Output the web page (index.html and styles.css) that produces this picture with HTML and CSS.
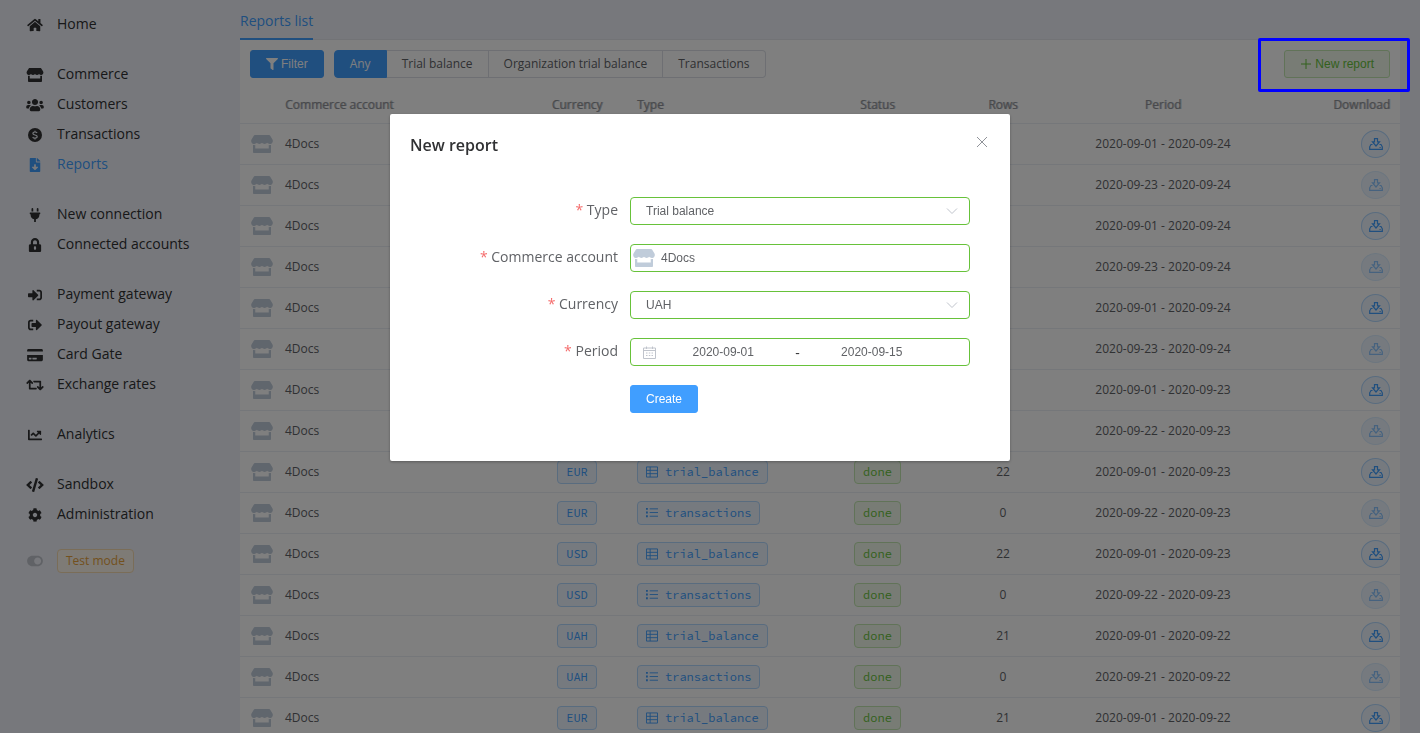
FILE: index.html
```html
<!DOCTYPE html>
<html lang="en">
<head>
<meta charset="utf-8">
<meta name="viewport" content="width=device-width, initial-scale=1">
<title>Reports list</title>
<link rel="stylesheet" href="styles.css">
</head>
<body>
<svg class="sprite" aria-hidden="true">
  <symbol id="home" viewBox="0 0 576 512"><path d="M280.37 148.26L96 300.11V464a16 16 0 0 0 16 16l112.06-.29a16 16 0 0 0 15.92-16V368a16 16 0 0 1 16-16h64a16 16 0 0 1 16 16v95.64a16 16 0 0 0 16 16.05L464 480a16 16 0 0 0 16-16V300L295.67 148.26a12.19 12.19 0 0 0-15.3 0zM571.6 251.47L488 182.56V44.05a12 12 0 0 0-12-12h-56a12 12 0 0 0-12 12v72.61L318.47 43a48 48 0 0 0-61 0L4.34 251.47a12 12 0 0 0-1.6 16.9l25.5 31A12 12 0 0 0 45.15 301l235.22-193.74a12.19 12.19 0 0 1 15.3 0L530.9 301a12 12 0 0 0 16.9-1.6l25.5-31a12 12 0 0 0-1.7-16.93z"/></symbol>
  <symbol id="store" viewBox="0 0 616 512"><path d="M602 118.6L537.1 15C531.3 5.7 521 0 510 0H106C95 0 84.7 5.7 78.9 15L14 118.6c-33.5 53.5-3.8 127.9 58.8 136.4 4.5.6 9.1.9 13.7.9 29.6 0 55.8-13 73.8-33.1 18 20.1 44.3 33.1 73.8 33.1 29.6 0 55.8-13 73.8-33.1 18 20.1 44.3 33.1 73.8 33.1 29.6 0 55.8-13 73.8-33.1 18.1 20.1 44.3 33.1 73.8 33.1 4.7 0 9.2-.3 13.7-.9 62.8-8.4 92.6-82.8 59-136.4zM529.5 288c-10 0-19.9-1.5-29.5-3.8V384H116v-99.8c-9.6 2.2-19.5 3.8-29.5 3.8-6 0-12.1-.4-18-1.2-5.6-.8-11.1-2.1-16.4-3.6V480c0 17.700 14.300 32 32 32h448c17.700 0 32-14.300 32-32V283.200c-5.400 1.600-10.800 2.900-16.400 3.600-6.100.8-12.100 1.200-18.200 1.200z"/></symbol>
  <symbol id="users" viewBox="0 0 640 512"><path d="M96 224c35.300 0 64-28.700 64-64s-28.700-64-64-64-64 28.700-64 64 28.700 64 64 64zm448 0c35.300 0 64-28.700 64-64s-28.700-64-64-64-64 28.700-64 64 28.700 64 64 64zm32 32h-64c-17.600 0-33.500 7.100-45.100 18.600 40.300 22.100 68.900 62 75.100 109.400h66c17.700 0 32-14.300 32-32v-32c0-35.300-28.700-64-64-64zm-256 0c61.900 0 112-50.100 112-112S381.900 32 320 32 208 82.100 208 144s50.100 112 112 112zm76.800 32h-8.300c-20.800 10-43.900 16-68.500 16s-47.600-6-68.500-16h-8.300C179.600 288 128 339.600 128 403.200V432c0 26.500 21.500 48 48 48h288c26.500 0 48-21.500 48-48v-28.800c0-63.600-51.600-115.200-115.200-115.200zm-223.700-13.400C161.500 263.100 145.600 256 128 256H64c-35.300 0-64 28.700-64 64v32c0 17.700 14.300 32 32 32h65.900c6.300-47.400 34.900-87.300 75.200-109.400z"/></symbol>
  <symbol id="coin" viewBox="0 0 14 14"><circle cx="7" cy="7" r="7"/><path d="M9.100 5.100C8.700 4.300 7.900 4 7 4c-1.200 0-2.100.6-2.100 1.500C4.900 7.500 9.200 6.500 9.200 8.600c0 .9-1 1.500-2.200 1.500-1 0-1.900-.4-2.300-1.200M7 2.700V4m0 6.100v1.300" fill="none" stroke="#eef0f8" stroke-width="1.2"/></symbol>
  <symbol id="file" viewBox="0 0 384 512"><path d="M224 136V0H24C10.700 0 0 10.700 0 24v464c0 13.300 10.700 24 24 24h336c13.300 0 24-10.700 24-24V160H248c-13.200 0-24-10.800-24-24zm76.450 211.360l-96.420 95.700c-6.650 6.610-17.390 6.610-24.040 0l-96.420-95.700C73.420 337.290 80.540 320 94.820 320H160v-80c0-8.840 7.160-16 16-16h32c8.840 0 16 7.160 16 16v80h65.180c14.280 0 21.400 17.290 11.270 27.360zM377 105L279.100 7c-4.500-4.500-10.600-7-17-7H256v128h128v-6.100c0-6.300-2.500-12.400-7-16.900z"/></symbol>
  <symbol id="plug" viewBox="0 0 384 512"><path d="M320 32a32 32 0 0 0-64 0v96h64zm48 128H16A16 16 0 0 0 0 176v32a16 16 0 0 0 16 16h16v32a160.070 160.070 0 0 0 128 156.800V512h64v-99.200A160.070 160.070 0 0 0 352 256v-32h16a16 16 0 0 0 16-16v-32a16 16 0 0 0-16-16zM128 32a32 32 0 0 0-64 0v96h64z"/></symbol>
  <symbol id="lock" viewBox="0 0 448 512"><path fill-rule="evenodd" d="M400 224h-24v-72C376 68.200 307.800 0 224 0S72 68.200 72 152v72H48c-26.500 0-48 21.500-48 48v192c0 26.500 21.500 48 48 48h352c26.500 0 48-21.500 48-48V272c0-26.500-21.500-48-48-48zm-104 0H152v-72c0-39.700 32.300-72 72-72s72 32.300 72 72v72zM264 392c0 22-18 40-40 40s-40-18-40-40v-48c0-22 18-40 40-40s40 18 40 40z"/></symbol>
  <symbol id="sign-in" viewBox="0 0 512 512"><path d="M416 448h-84c-6.600 0-12-5.400-12-12v-40c0-6.600 5.400-12 12-12h84c17.700 0 32-14.300 32-32V160c0-17.700-14.300-32-32-32h-84c-6.600 0-12-5.400-12-12V76c0-6.600 5.400-12 12-12h84c53 0 96 43 96 96v192c0 53-43 96-96 96zm-47-201L201 79c-15-15-41-4.500-41 17v96H24c-13.300 0-24 10.700-24 24v96c0 13.300 10.700 24 24 24h136v96c0 21.500 26 32 41 17l168-168c9.300-9.400 9.300-24.600 0-34z"/></symbol>
  <symbol id="sign-out" viewBox="0 0 512 512"><path d="M497 273L329 441c-15 15-41 4.500-41-17v-96H152c-13.300 0-24-10.700-24-24v-96c0-13.300 10.700-24 24-24h136V88c0-21.400 25.900-32 41-17l168 168c9.300 9.400 9.300 24.600 0 34zM192 436v-40c0-6.600-5.400-12-12-12H96c-17.700 0-32-14.300-32-32V160c0-17.700 14.300-32 32-32h84c6.600 0 12-5.400 12-12V76c0-6.600-5.400-12-12-12H96c-53 0-96 43-96 96v192c0 53 43 96 96 96h84c6.600 0 12-5.400 12-12z"/></symbol>
  <symbol id="card" viewBox="0 0 576 512"><path d="M0 432c0 26.500 21.500 48 48 48h480c26.500 0 48-21.500 48-48V256H0v176zm192-68c0-6.600 5.400-12 12-12h136c6.600 0 12 5.400 12 12v40c0 6.600-5.400 12-12 12H204c-6.600 0-12-5.400-12-12v-40zm-128 0c0-6.600 5.400-12 12-12h72c6.600 0 12 5.400 12 12v40c0 6.600-5.400 12-12 12H76c-6.600 0-12-5.400-12-12v-40zM576 80v48H0V80c0-26.500 21.500-48 48-48h480c26.500 0 48 21.500 48 48z"/></symbol>
  <symbol id="retweet" viewBox="0 0 640 512"><path d="M629.657 343.598L528.971 444.284c-9.373 9.372-24.568 9.372-33.941 0L394.343 343.598c-9.373-9.373-9.373-24.569 0-33.941l10.823-10.823c9.562-9.562 25.133-9.340 34.419.492L480 342.118V160H292.451a24.005 24.005 0 0 1-16.971-7.029l-16-16C244.361 121.851 255.069 96 276.451 96H520c13.255 0 24 10.745 24 24v222.118l40.416-42.792c9.285-9.831 24.856-10.054 34.419-.492l10.823 10.823c9.372 9.372 9.372 24.569-.001 33.941zm-265.138 15.431A23.999 23.999 0 0 0 347.548 352H160V169.881l40.416 42.792c9.286 9.831 24.856 10.054 34.419.491l10.822-10.822c9.373-9.373 9.373-24.569 0-33.941L144.971 67.716c-9.373-9.373-24.569-9.373-33.941 0L10.343 168.402c-9.373 9.373-9.373 24.569 0 33.941l10.822 10.822c9.562 9.562 25.133 9.340 34.419-.491L96 169.881V392c0 13.255 10.745 24 24 24h243.549c21.382 0 32.090-25.851 16.971-40.971l-16.001-16z"/></symbol>
  <symbol id="chart" viewBox="0 0 512 512"><path d="M496 384H64V80c0-8.840-7.160-16-16-16H16C7.160 64 0 71.160 0 80v336c0 17.670 14.330 32 32 32h464c8.840 0 16-7.160 16-16v-32c0-8.840-7.160-16-16-16zM464 96H345.940c-21.380 0-32.090 25.850-16.970 40.970l32.400 32.400L288 242.750l-73.370-73.370c-12.500-12.500-32.760-12.500-45.250 0l-68.690 68.690c-6.250 6.250-6.250 16.380 0 22.630l22.620 22.620c6.250 6.250 16.380 6.250 22.630 0L192 237.250l73.370 73.370c12.500 12.500 32.760 12.500 45.250 0l96-96 32.400 32.400c15.120 15.120 40.970 4.410 40.970-16.970V112c.01-8.840-7.150-16-15.990-16z"/></symbol>
  <symbol id="code" viewBox="0 0 640 512"><path d="M278.900 511.500l-61-17.700c-6.400-1.800-10-8.500-8.200-14.900L346.200 8.700c1.800-6.400 8.500-10 14.900-8.200l61 17.700c6.400 1.800 10 8.500 8.200 14.900L293.800 503.300c-1.900 6.400-8.500 10.100-14.900 8.200zm-114-112.200l43.500-46.400c4.600-4.900 4.300-12.700-.8-17.200L117 256l90.600-79.700c5.100-4.500 5.500-12.300.8-17.200l-43.500-46.400c-4.500-4.800-12.100-5.100-17-.5L3.800 247.200c-5.100 4.700-5.100 12.800 0 17.500l144.100 135.100c4.900 4.600 12.500 4.400 17-.5zm327.200.6l144.100-135.100c5.100-4.700 5.100-12.800 0-17.500L492.100 112.100c-4.800-4.500-12.400-4.300-17 .5L431.600 159c-4.600 4.900-4.300 12.700.8 17.200L523 256l-90.600 79.700c-5.100 4.500-5.500 12.300-.8 17.200l43.500 46.400c4.500 4.900 12.100 5.100 17 .6z"/></symbol>
  <symbol id="cog" viewBox="0 0 512 512"><path d="M487.400 315.700l-42.600-24.600c4.300-23.200 4.300-47 0-70.200l42.600-24.600c4.900-2.800 7.100-8.600 5.500-14-11.100-35.600-30-67.800-54.700-94.600-3.800-4.100-10-5.100-14.800-2.300L380.800 110c-17.900-15.400-38.500-27.300-60.800-35.100V25.800c0-5.600-3.900-10.500-9.400-11.700-36.700-8.200-74.300-7.800-109.200 0-5.500 1.200-9.400 6.100-9.400 11.700V75c-22.200 7.900-42.800 19.800-60.800 35.100L88.700 85.500c-4.900-2.800-11-1.900-14.800 2.300-24.700 26.700-43.600 58.900-54.700 94.600-1.700 5.400.6 11.200 5.500 14L67.300 221c-4.300 23.200-4.300 47 0 70.200l-42.600 24.600c-4.900 2.800-7.100 8.600-5.500 14 11.100 35.600 30 67.800 54.700 94.600 3.800 4.100 10 5.100 14.800 2.300l42.600-24.600c17.900 15.400 38.500 27.300 60.800 35.100v49.200c0 5.600 3.900 10.500 9.400 11.700 36.700 8.200 74.300 7.800 109.200 0 5.500-1.200 9.400-6.100 9.400-11.700v-49.200c22.200-7.900 42.800-19.800 60.800-35.100l42.600 24.600c4.900 2.800 11 1.900 14.800-2.300 24.700-26.700 43.600-58.900 54.700-94.600 1.500-5.500-.7-11.300-5.600-14.100zM256 336c-44.100 0-80-35.900-80-80s35.900-80 80-80 80 35.900 80 80-35.900 80-80 80z"/></symbol>
  <symbol id="toggle" viewBox="0 0 576 512"><path d="M384 64H192C86 64 0 150 0 256s86 192 192 192h192c106 0 192-86 192-192S490 64 384 64zm0 320c-70.800 0-128-57.300-128-128 0-70.800 57.300-128 128-128 70.800 0 128 57.300 128 128 0 70.800-57.300 128-128 128z"/></symbol>
  <symbol id="filter" viewBox="0 0 512 512"><path d="M487.976 0H24.028C2.710 0-8.047 25.866 7.058 40.971L192 225.941V432c0 7.831 3.821 15.170 10.237 19.662l80 55.980C298.020 518.690 320 507.493 320 487.980V225.941l184.947-184.970C520.021 25.896 509.338 0 487.976 0z"/></symbol>
  <symbol id="plus" viewBox="0 0 12 12"><path d="M6 1v10M1 6h10" fill="none" stroke="currentColor"/></symbol>
  <symbol id="download" viewBox="0 0 14 12"><path d="M3.500 6.500H2L.7 8.800v2.600h12.600V8.800L12 6.500h-1.500M5.500.6h3v3.300h2L7 8 3.500 3.900h2zM10.500 9.500h1.200" fill="none" stroke="currentColor" stroke-width="1.200"/></symbol>
  <symbol id="sheet" viewBox="0 0 13 12"><path d="M.5.5h12v11H.5zM4.500.5v11M.5 4.200h12M.5 7.800h12" fill="none" stroke="currentColor"/></symbol>
  <symbol id="list" viewBox="0 0 13 12"><path d="M4 1.500h9M4 5.500h9M4 9.500h9" fill="none" stroke="currentColor"/><path d="M0 .5h2v2H0zM0 4.500h2v2H0zM0 8.500h2v2H0z"/></symbol>
  <symbol id="calendar" viewBox="0 0 13 13"><path d="M.5 2h12v10.500H.5zM.5 4.500h12M3.500.5V3M9.500.5V3M3 7h1.500M5.800 7h1.500M8.500 7H10M3 9.500h1.500M5.800 9.500h1.500M8.500 9.500H10" fill="none" stroke="currentColor"/></symbol>
  <symbol id="chevron" viewBox="0 0 12 12"><path d="M1 3.500l5 5 5-5" fill="none" stroke="currentColor"/></symbol>
  <symbol id="close" viewBox="0 0 12 12"><path d="M1 1l10 10M11 1L1 11" fill="none" stroke="currentColor"/></symbol>
</svg>

<div class="app">
  <nav class="sidebar" aria-label="Main">
    <div class="nav-group">
      <a class="nav-item" href="#"><svg class="nav-icon"><use href="#home"/></svg>Home</a>
    </div>
    <div class="nav-group">
      <a class="nav-item" href="#"><svg class="nav-icon"><use href="#store"/></svg>Commerce</a>
      <a class="nav-item" href="#"><svg class="nav-icon"><use href="#users"/></svg>Customers</a>
      <a class="nav-item" href="#"><svg class="nav-icon"><use href="#coin"/></svg>Transactions</a>
      <a class="nav-item active" href="#"><svg class="nav-icon"><use href="#file"/></svg>Reports</a>
    </div>
    <div class="nav-group">
      <a class="nav-item" href="#"><svg class="nav-icon"><use href="#plug"/></svg>New connection</a>
      <a class="nav-item" href="#"><svg class="nav-icon"><use href="#lock"/></svg>Connected accounts</a>
    </div>
    <div class="nav-group">
      <a class="nav-item" href="#"><svg class="nav-icon"><use href="#sign-in"/></svg>Payment gateway</a>
      <a class="nav-item" href="#"><svg class="nav-icon"><use href="#sign-out"/></svg>Payout gateway</a>
      <a class="nav-item" href="#"><svg class="nav-icon"><use href="#card"/></svg>Card Gate</a>
      <a class="nav-item" href="#"><svg class="nav-icon"><use href="#retweet"/></svg>Exchange rates</a>
    </div>
    <div class="nav-group">
      <a class="nav-item" href="#"><svg class="nav-icon"><use href="#chart"/></svg>Analytics</a>
    </div>
    <div class="nav-group">
      <a class="nav-item" href="#"><svg class="nav-icon"><use href="#code"/></svg>Sandbox</a>
      <a class="nav-item" href="#"><svg class="nav-icon"><use href="#cog"/></svg>Administration</a>
    </div>
    <button class="test-mode" type="button"><svg class="toggle-icon"><use href="#toggle"/></svg><span class="tag tag-warning">Test mode</span></button>
  </nav>

  <main class="main">
    <div class="tabs"><a class="tab" href="#">Reports list</a></div>
    <section class="panel">
      <div class="toolbar">
        <button class="btn btn-primary btn-filter" type="button"><svg><use href="#filter"/></svg>Filter</button>
        <div class="segments" role="radiogroup" aria-label="Report type">
          <label class="segment"><input type="radio" name="kind" checked><span>Any</span></label>
          <label class="segment"><input type="radio" name="kind"><span>Trial balance</span></label>
          <label class="segment"><input type="radio" name="kind"><span>Organization trial balance</span></label>
          <label class="segment"><input type="radio" name="kind"><span>Transactions</span></label>
        </div>
        <div class="new-report">
          <button class="btn btn-success" type="button"><svg><use href="#plus"/></svg>New report</button>
          <span class="highlight"></span>
        </div>
      </div>
      <table class="reports">
        <colgroup><col class="c-icon"><col><col class="c-currency"><col class="c-type"><col class="c-status"><col class="c-rows"><col class="c-period"><col class="c-download"></colgroup>
        <thead>
          <tr><th></th><th>Commerce account</th><th class="center">Currency</th><th>Type</th><th class="center">Status</th><th class="center">Rows</th><th class="center">Period</th><th class="right">Download</th></tr>
        </thead>
        <tbody id="rows"></tbody>
      </table>
    </section>
  </main>
</div>

<div class="overlay">
  <div class="dialog" role="dialog" aria-labelledby="dialog-title">
    <header class="dialog-head">
      <h2 id="dialog-title">New report</h2>
      <button class="close" type="button" aria-label="Close"><svg><use href="#close"/></svg></button>
    </header>
    <form class="form">
      <label for="type">Type</label>
      <div class="control"><select id="type"><option>Trial balance</option></select><svg class="arrow"><use href="#chevron"/></svg></div>
      <label for="account">Commerce account</label>
      <div class="control control-icon"><svg class="store"><use href="#store"/></svg><input id="account" type="text" value="4Docs"></div>
      <label for="currency">Currency</label>
      <div class="control"><select id="currency"><option>UAH</option></select><svg class="arrow"><use href="#chevron"/></svg></div>
      <label for="from">Period</label>
      <div class="control range"><svg class="calendar"><use href="#calendar"/></svg><input id="from" type="text" value="2020-09-01"><span>-</span><input type="text" aria-label="Period end" value="2020-09-15"></div>
      <button class="btn btn-primary btn-create" type="button">Create</button>
    </form>
  </div>
</div>
<script src="app.js"></script>
</body>
</html>
```
FILE: styles.css
```css
* { box-sizing: border-box; }

body {
  margin: 0;
  height: 100vh;
  overflow: hidden;
  background: #eff1f8;
  color: #606266;
  font-family: "Open Sans", "Noto Sans", sans-serif;
  font-size: 14px;
}

a { color: inherit; text-decoration: none; }
svg { fill: currentColor; flex: none; }
.sprite { position: absolute; width: 0; height: 0; }

button, input, select {
  font-family: "Liberation Sans", Arial, sans-serif;
  font-size: 12px;
  color: inherit;
}

.app {
  display: grid;
  grid-template-columns: 240px minmax(0, 1fr);
  padding-right: 20px;
}

/* Sidebar */
.sidebar {
  display: flex;
  flex-direction: column;
  gap: 20px;
  padding: 9px 0 0 26px;
  color: #303133;
}

.nav-item {
  display: flex;
  align-items: center;
  gap: 13px;
  height: 30px;
  padding-bottom: 2px;
}

.nav-item.active { color: #409eff; }
.nav-icon { width: 18px; height: 14px; margin-top: 4px; }
.toggle-icon { width: 18px; height: 14px; }

.test-mode {
  display: flex;
  align-items: center;
  gap: 13px;
  padding: 0;
  border: 0;
  background: none;
  color: #c0c4cc;
}

.tag {
  display: inline-flex;
  align-items: center;
  gap: 7px;
  height: 24px;
  padding: 0 8px;
  border: 1px solid #b3d8ff;
  border-radius: 4px;
  background: #ecf5ff;
  color: #409eff;
  font-family: "Source Code Pro", "DejaVu Sans Mono", monospace;
  font-size: 12px;
}

.tag svg { width: 12px; height: 12px; }
.tag-success { border-color: #c2e7b0; background: #f0f9eb; color: #67c23a; }
.tag-warning {
  padding-bottom: 2px;
  border-color: #f5dab1;
  background: #fdf6ec;
  color: #e6a23c;
  font-family: "Open Sans", "Noto Sans", sans-serif;
}

/* Main panel */
.tabs {
  display: flex;
  height: 40px;
  border-bottom: 1px solid #e4e7ed;
}

.tab {
  height: 40px;
  border-bottom: 2px solid #409eff;
  color: #409eff;
  line-height: 42px;
}

.panel { background: #fff; }

.toolbar {
  display: flex;
  align-items: center;
  padding: 10px 10px 9px;
}

.btn {
  display: inline-flex;
  align-items: center;
  justify-content: center;
  height: 28px;
  padding: 0 15px;
  border: 1px solid #409eff;
  border-radius: 3px;
}

.btn-primary { background: #409eff; color: #fff; }
.btn-filter { gap: 3px; margin-right: 10px; }
.btn-filter svg { width: 12px; height: 12px; }
.btn-success { gap: 3px; border-color: #c2e7b0; background: #f0f9eb; color: #67c23a; }
.btn-success svg { width: 12px; height: 12px; }

.segments { display: flex; }
.segment input { position: absolute; opacity: 0; }
.segment span {
  display: flex;
  align-items: center;
  height: 28px;
  padding: 0 15px 2px;
  border: 1px solid #dcdfe6;
  border-left: 0;
  font-size: 12px;
}

.segment:first-child span { border-left: 1px solid #409eff; border-radius: 4px 0 0 4px; }
.segment:last-child span { border-radius: 0 4px 4px 0; }
.segment input:checked + span { border-color: #409eff; background: #409eff; color: #fff; }

.new-report { position: relative; display: flex; margin-left: auto; }
.highlight {
  position: absolute;
  z-index: 3;
  inset: -12px -20px -14px -26px;
  border: 3px solid #00f;
  border-radius: 2px;
  pointer-events: none;
}

.reports {
  width: 100%;
  table-layout: fixed;
  border-collapse: collapse;
  font-size: 12px;
}

.c-icon { width: 35px; }
.c-currency { width: 100px; }
.c-type { width: 201px; }
.c-status { width: 99px; }
.c-rows { width: 152px; }
.c-period { width: 168px; }
.c-download { width: 153px; }

.reports th, .reports td {
  height: 41px;
  padding: 0 10px;
  border-bottom: 1px solid #ebeef5;
  text-align: left;
}

.reports th {
  height: 36px;
  color: #909399;
  font-weight: 400;
  text-shadow: 1px 0 rgba(144, 147, 153, 0.6);
}

.reports td > * { vertical-align: middle; }
.reports .center { text-align: center; }
.reports .right { text-align: right; }
.reports .store { margin-left: 1px; }
.store { width: 22px; height: 18px; color: #c0ccda; }

.download {
  display: inline-flex;
  align-items: center;
  justify-content: center;
  width: 29px;
  height: 28px;
  padding: 0;
  border: 1px solid #b3d8ff;
  border-radius: 50%;
  background: #ecf5ff;
  color: #409eff;
}

.download svg { width: 14px; height: 12px; }
.download:disabled { border-color: #d9ecff; color: #8cc5ff; }

/* Dialog */
.overlay {
  position: fixed;
  z-index: 2;
  inset: 0;
  padding-right: 20px;
  background: rgba(0, 0, 0, 0.5);
}

.dialog {
  width: 620px;
  max-width: 100%;
  margin: 114px auto 0;
  padding: 20px 20px 48px;
  border-radius: 2px;
  background: #fff;
  box-shadow: 0 1px 3px rgba(0, 0, 0, 0.3);
}

.dialog-head { display: flex; justify-content: space-between; }
.dialog h2 {
  margin: 0;
  color: #303133;
  font-size: 16px;
  font-weight: 600;
  line-height: 22px;
}

.close {
  display: flex;
  align-items: center;
  height: 16px;
  padding: 0 2px;
  border: 0;
  background: none;
  color: #909399;
}

.close svg { width: 12px; height: 12px; }

.form {
  display: grid;
  grid-template-columns: 208px minmax(0, 1fr);
  gap: 19px 12px;
  align-items: center;
  padding: 41px 20px 0 0;
}

.form label { padding-bottom: 2px; text-align: right; line-height: 26px; }
.form label::before { content: "* "; color: #f56c6c; }

.control {
  position: relative;
  display: flex;
  align-items: center;
  height: 28px;
  border: 1px solid #67c23a;
  border-radius: 4px;
  background: #fff;
}

.control input, .control select {
  width: 100%;
  min-width: 0;
  height: 26px;
  padding: 0 15px;
  border: 0;
  outline: 0;
  background: transparent;
  appearance: none;
}

.arrow {
  position: absolute;
  right: 11px;
  width: 12px;
  height: 12px;
  color: #c0c4cc;
  pointer-events: none;
}

.control-icon { padding-left: 2px; }
.control-icon input { padding: 0 6px; }
.range { padding: 0 30px 0 12px; color: #606266; }
.range input { flex: 1; width: 0; padding: 0; text-align: center; }
.range span { width: 14px; text-align: center; color: #303133; }
.calendar { width: 13px; height: 13px; color: #c0c4cc; }
.btn-create { grid-column: 2; justify-self: start; }
```
FILE: app.js
```js
const reports = [
  { from: "2020-09-01", to: "2020-09-24" },
  { from: "2020-09-23", to: "2020-09-24" },
  { from: "2020-09-01", to: "2020-09-24" },
  { from: "2020-09-23", to: "2020-09-24" },
  { from: "2020-09-01", to: "2020-09-24" },
  { from: "2020-09-23", to: "2020-09-24" },
  { from: "2020-09-01", to: "2020-09-23" },
  { from: "2020-09-22", to: "2020-09-23" },
  { from: "2020-09-01", to: "2020-09-23", currency: "EUR", type: "trial_balance", rows: 22 },
  { from: "2020-09-22", to: "2020-09-23", currency: "EUR", type: "transactions", rows: 0 },
  { from: "2020-09-01", to: "2020-09-23", currency: "USD", type: "trial_balance", rows: 22 },
  { from: "2020-09-22", to: "2020-09-23", currency: "USD", type: "transactions", rows: 0 },
  { from: "2020-09-01", to: "2020-09-22", currency: "UAH", type: "trial_balance", rows: 21 },
  { from: "2020-09-21", to: "2020-09-22", currency: "UAH", type: "transactions", rows: 0 },
  { from: "2020-09-01", to: "2020-09-22", currency: "EUR", type: "trial_balance", rows: 21 },
];

const details = (r) => r.type
  ? `<td class="center"><span class="tag">${r.currency}</span></td>
     <td><span class="tag"><svg><use href="#${r.type === "transactions" ? "list" : "sheet"}"/></svg>${r.type}</span></td>
     <td class="center"><span class="tag tag-success">done</span></td>
     <td class="center">${r.rows}</td>`
  : "<td></td><td></td><td></td><td></td>";

document.getElementById("rows").innerHTML = reports.map((r) => `
  <tr>
    <td><svg class="store"><use href="#store"/></svg></td>
    <td>4Docs</td>
    ${details(r)}
    <td class="center">${r.from} - ${r.to}</td>
    <td class="right"><button class="download" type="button" aria-label="Download"${r.from === "2020-09-01" ? "" : " disabled"}><svg><use href="#download"/></svg></button></td>
  </tr>`).join("");
```
